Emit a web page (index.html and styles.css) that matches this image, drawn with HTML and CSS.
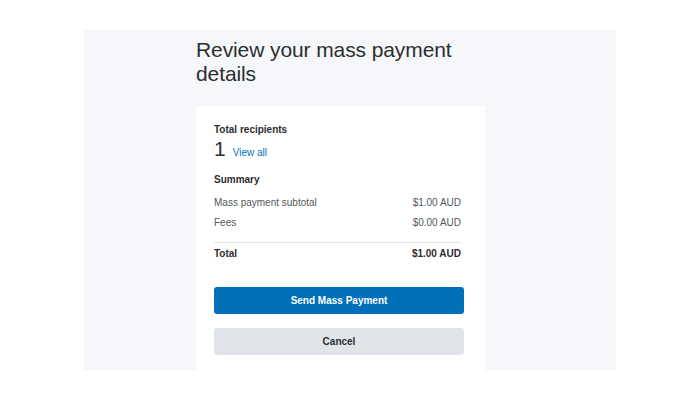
FILE: index.html
```html
<!DOCTYPE html>
<html>
<head>
<meta charset="utf-8">
<link rel="stylesheet" href="styles.css">
</head>
<body>
<div class="panel">
  <div class="column">
    <h1 class="title">Review your mass payment details</h1>
    <div class="card">
      <div class="label">Total recipients</div>
      <div class="count-line">
        <span class="count">1</span>
        <a class="view-all">View all</a>
      </div>
      <div class="label summary">Summary</div>
      <div class="rows">
        <div class="row"><span>Mass payment subtotal</span><span>$1.00 AUD</span></div>
        <div class="row"><span>Fees</span><span>$0.00 AUD</span></div>
      </div>
      <div class="row total"><span>Total</span><span>$1.00 AUD</span></div>
      <button class="btn primary">Send Mass Payment</button>
      <button class="btn secondary">Cancel</button>
    </div>
  </div>
</div>
</body>
</html>
```
FILE: styles.css
```css
html, body {
  margin: 0;
  padding: 0;
  background: #ffffff;
  font-family: "Liberation Sans", Arial, sans-serif;
  color: #2c2e2f;
}
.panel {
  margin: 30px 0 0 84px;
  width: 532px;
  height: 340px;
  background: #f5f7fa;
  display: flex;
}
.column {
  margin-left: 112px;
  width: 289px;
  display: flex;
  flex-direction: column;
}
.title {
  margin: 8px 0 0 0;
  font-size: 21px;
  line-height: 24px;
  font-weight: 400;
  letter-spacing: -0.1px;
  color: #2c2e2f;
}
.card {
  margin-top: 20px;
  background: #ffffff;
  padding: 17px 21px 14px 18px;
  display: flex;
  flex-direction: column;
  flex: 1;
}
.label {
  font-size: 10px;
  line-height: 14px;
  font-weight: 700;
  color: #2c2e2f;
}
.count-line {
  margin-top: 1px;
  display: flex;
  align-items: baseline;
  line-height: 22px;
}
.count {
  font-size: 21px;
  font-weight: 400;
  color: #2c2e2f;
}
.view-all {
  margin-left: 7px;
  font-size: 10px;
  color: #0070ba;
}
.summary {
  margin-top: 9px;
}
.rows {
  margin-top: 6px;
  margin-right: 3px;
  padding-bottom: 9px;
  border-bottom: 1px solid #e3e4e5;
}
.row {
  display: flex;
  justify-content: space-between;
  font-size: 10px;
  line-height: 20px;
  color: #555758;
}
.total {
  margin-top: 1px;
  margin-right: 3px;
  font-weight: 700;
  color: #2c2e2f;
}
.btn {
  height: 27px;
  border: none;
  border-radius: 3px;
  font-family: "Liberation Sans", Arial, sans-serif;
  font-size: 10px;
  font-weight: 700;
  padding: 0;
  width: 100%;
}
.primary {
  margin-top: 23px;
  background: #0070ba;
  color: #ffffff;
}
.secondary {
  margin-top: 14px;
  background: #e1e5e9;
  color: #2c2e2f;
}
```
